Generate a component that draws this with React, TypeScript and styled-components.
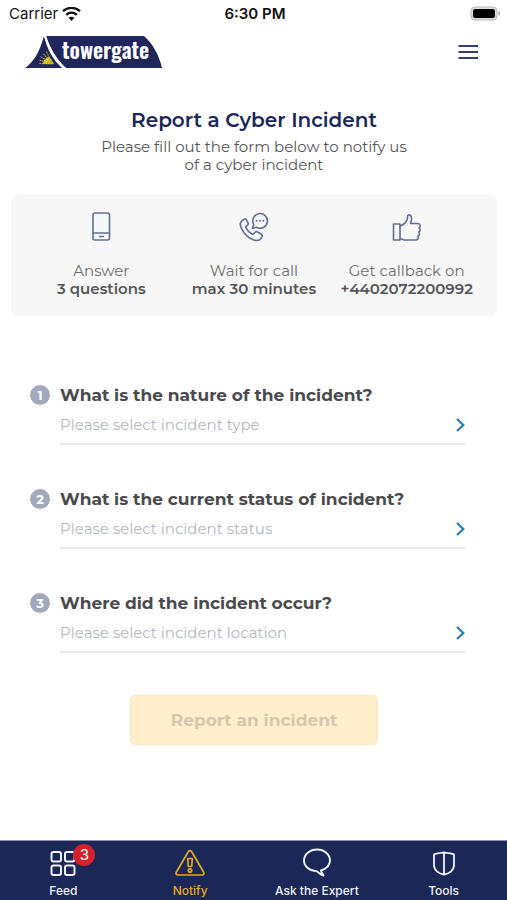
import React from "react";
import styled, { createGlobalStyle } from "styled-components";

const navy = "#1b2757";
const text = "#4b4b4d";

const GlobalStyle = createGlobalStyle`
  *, *::before, *::after { box-sizing: border-box; }
  body {
    margin: 0;
    background: #fff;
    color: ${text};
    font-family: Montserrat, Inter, "Open Sans", sans-serif;
  }
  h1, h2, p, ul, ol { margin: 0; padding: 0; list-style: none; }
  button, select { font: inherit; }
`;

const Screen = styled.div`
  min-height: 100vh;
  display: flex;
  flex-direction: column;
`;

const StatusBar = styled.div`
  display: grid;
  grid-template-columns: 1fr auto 1fr;
  align-items: center;
  height: 28px;
  padding: 0 6px 0 9px;
  color: #111;
  font-family: Inter, sans-serif;
  font-size: 15px;
  line-height: 20px;
`;

const Carrier = styled.span`
  display: flex;
  align-items: center;
  gap: 4px;
`;

const Clock = styled.time`
  font-weight: 600;
`;

const BatteryIcon = styled.svg`
  justify-self: end;
`;

const Header = styled.header`
  display: flex;
  align-items: center;
  justify-content: space-between;
  height: 48px;
  padding: 0 28px 0 25px;
`;

const LogoLink = styled.a`
  display: block;
  height: 34px;
`;

const MenuButton = styled.button`
  display: flex;
  padding: 0;
  border: 0;
  background: none;
  cursor: pointer;
`;

const Main = styled.main`
  display: flex;
  flex-direction: column;
  flex: 1;
  padding: 32px 10px 40px 11px;
`;

const Title = styled.h1`
  color: ${navy};
  font-size: 20px;
  font-weight: 600;
  line-height: 24px;
  text-align: center;
`;

const Intro = styled.p`
  width: 320px;
  max-width: 100%;
  margin: 6px auto 20px;
  color: #555557;
  font-size: 15px;
  line-height: 18px;
  text-align: center;
`;

const Steps = styled.ul`
  display: grid;
  grid-template-columns: repeat(3, 1fr);
  padding: 16px 14px;
  border-radius: 8px;
  background: #f7f7f7;
`;

const Step = styled.li`
  display: flex;
  flex-direction: column;
  align-items: center;
  padding-bottom: 2px;
  font-size: 15px;
  line-height: 18px;
  color: #6c6c6e;
  white-space: nowrap;

  svg { margin-bottom: 18px; }
  strong { font-weight: 600; color: #555557; }
`;

const Form = styled.form`
  display: flex;
  flex-direction: column;
  gap: 42px;
  padding: 67px 32px 0 19px;
`;

const Question = styled.div`
  display: grid;
  grid-template-columns: 20px 1fr;
  column-gap: 10px;
  align-items: center;
`;

const Badge = styled.span`
  height: 20px;
  border-radius: 50%;
  background: #a2a9bc;
  color: #fff;
  font-size: 13px;
  font-weight: 700;
  line-height: 20px;
  text-align: center;
`;

const Label = styled.label`
  font-size: 17px;
  font-weight: 700;
  line-height: 24px;
`;

const Field = styled.div`
  grid-column: 2;
  display: grid;
  align-items: center;
  border-bottom: 2px solid #e9eaec;

  > * { grid-area: 1 / 1; }
  svg { justify-self: end; pointer-events: none; }
`;

const Select = styled.select`
  width: 100%;
  height: 36px;
  padding: 0 24px 0 0;
  border: 0;
  background: none;
  color: #b3b8c1;
  font-size: 15px;
  line-height: 20px;
  appearance: none;
`;

const Submit = styled.button`
  align-self: center;
  width: 248px;
  height: 50px;
  margin-left: 13px;
  border: 1px solid #fbe8bd;
  border-radius: 5px;
  background: #feeecb;
  color: #d5c8ab;
  font-size: 17px;
  font-weight: 700;
`;

const TabBar = styled.nav`
  position: sticky;
  bottom: 0;
  display: grid;
  grid-template-columns: repeat(4, 1fr);
  height: 60px;
  border-top: 1px solid #8b91a8;
  background: ${navy};
`;

const Tab = styled.a<{ $active?: boolean }>`
  display: flex;
  flex-direction: column;
  align-items: center;
  gap: 5px;
  padding-top: 7px;
  color: ${(p) => (p.$active ? "#e5a823" : "#eef1fa")};
  font-family: Inter, sans-serif;
  font-size: 12px;
  font-weight: 500;
  line-height: 16px;
  text-decoration: none;
  white-space: nowrap;
`;

const TabIcon = styled.span`
  position: relative;
  display: flex;
  height: 30px;
`;

const Count = styled.span`
  position: absolute;
  top: -4px;
  left: 24px;
  width: 22px;
  height: 22px;
  border-radius: 50%;
  background: #d3222b;
  color: #fff;
  font-size: 15px;
  font-weight: 400;
  line-height: 22px;
  text-align: center;
`;

const Logo = () => (
  <svg width="138" height="34" viewBox="0 0 138 34" role="img" aria-label="towergate">
    <path d="M21 1H119C128 9 134 20 137 33H41C31 24 25 13 21 1Z" fill="#20255c" />
    <path d="M19 1C15 15 10 26 0 33H37C28 25 22 14 19 1Z" fill="#20255c" />
    <path d="M20 1C24 14 30 24 39 33" fill="none" stroke="#fff" strokeWidth="2" />
    <path d="M29 29H18L19 25L23 22L26 24Z" fill="#f5dc20" />
    <path d="M28 29L14 28.5M28 29L14 25M28 29L15 21.5M28 29L18 18.5M28 29L21 16" fill="none" stroke="#b5a232" strokeWidth="1.1" strokeDasharray="1.8 0.6" />
    <text x="37" y="24" fill="#fff" fontFamily="Oswald, 'Roboto Condensed', 'Liberation Sans', sans-serif" fontSize="22" fontWeight="600">
      towergate
    </text>
  </svg>
);

const PhoneIcon = () => (
  <svg width="30" height="34" viewBox="0 0 30 34" fill="none" stroke="#626d96" strokeWidth="1.6" aria-hidden="true">
    <rect x="7" y="3" width="16.5" height="27" rx="2" />
    <path d="M7 23H23.5M13 26.5H18" />
  </svg>
);

const CallIcon = () => (
  <svg width="30" height="34" viewBox="0 0 30 34" fill="none" stroke="#626d96" strokeWidth="1.6" strokeLinejoin="round" strokeLinecap="round" aria-hidden="true">
    <path d="M5.5 9.3L3 10.8C.8 12.3 1 15.3 2.4 18.2C5 23.8 9.3 28 14.7 30C18 31 20.5 30.6 22 28.5L23.2 26.5C23.6 25.5 23.2 24.8 22.5 24.3L18.2 21.8C17.4 21.4 16.7 21.6 16.1 22.2L14.7 23.8C14.2 24.4 13.5 24.4 12.8 24C10.2 22.5 8.3 20.4 7 17.8C6.6 17.1 6.9 16.5 7.4 16.1L8.7 15C9.3 14.5 9.4 13.7 9.1 13L7.3 9.8C6.9 9.1 6.2 8.9 5.5 9.3Z" />
    <path d="M14.8 14.6A7.3 7.3 0 1 1 17.6 17.3L13.3 18.2Z" />
    <path d="M17.5 10.8H17.6M20.9 10.8H21M24.3 10.8H24.4" strokeWidth="1.9" />
  </svg>
);

const ThumbIcon = () => (
  <svg width="30" height="34" viewBox="0 0 30 34" fill="none" stroke="#626d96" strokeWidth="1.6" strokeLinejoin="round" strokeLinecap="round" aria-hidden="true">
    <path d="M1.5 14H8V30H1.5Z" />
    <path d="M8 16C12 14.5 14.5 12 15.5 8.5V6.5C15.5 4.3 18.8 4.3 19.4 7C20 9.4 19.3 11.5 18.5 13.5H25.5C28.7 13.5 29 17 27 17.9C28.8 19 28.3 21.5 26.6 22C28.1 23.4 27.5 25.5 25.9 26C27 28 26 30 23.5 30H13C11 30 10.5 29 8 28.7" />
  </svg>
);

const Chevron = () => (
  <svg width="10" height="16" viewBox="0 0 10 16" fill="none" stroke="#2180ad" strokeWidth="2.2" aria-hidden="true">
    <path d="M2 2L8.3 8L2 14" />
  </svg>
);

const steps = [
  { icon: <PhoneIcon />, top: "Answer", bottom: "3 questions" },
  { icon: <CallIcon />, top: "Wait for call", bottom: "max 30 minutes" },
  { icon: <ThumbIcon />, top: "Get callback on", bottom: "+4402072200992" },
];

const questions = [
  { id: "type", label: "What is the nature of the incident?", hint: "Please select incident type" },
  { id: "status", label: "What is the current status of incident?", hint: "Please select incident status" },
  { id: "location", label: "Where did the incident occur?", hint: "Please select incident location" },
];

export default function App() {
  return (
    <Screen>
      <GlobalStyle />
      <StatusBar>
        <Carrier>
          Carrier
          <svg width="19" height="15" viewBox="0 0 19 15" fill="none" stroke="#111" strokeWidth="2.4" aria-hidden="true">
            <path d="M1 4.2C5.8-.2 13.2-.2 18 4.2M4.2 7.8C7.3 5 11.7 5 14.8 7.8" />
            <path d="M9.5 14L6.5 10.8C8.2 9.3 10.8 9.3 12.5 10.8Z" fill="#111" stroke="none" />
          </svg>
        </Carrier>
        <Clock>6:30 PM</Clock>
        <BatteryIcon width="31" height="16" viewBox="0 0 31 16" aria-hidden="true">
          <rect x="1" y="1" width="26" height="13" rx="4" fill="#ddd" stroke="#bbb" />
          <rect x="3" y="3" width="22" height="9" rx="2" fill="#000" />
          <path d="M28.5 5C30.6 6 30.6 9 28.5 10Z" fill="#aaa" />
        </BatteryIcon>
      </StatusBar>
      <Header>
        <LogoLink href="#home"><Logo /></LogoLink>
        <MenuButton type="button" aria-label="Menu">
          <svg width="22" height="18" viewBox="0 0 22 18" stroke="#343d70" strokeWidth="2" aria-hidden="true">
            <path d="M1.5 3H21M1.5 9H21M1.5 15H21" />
          </svg>
        </MenuButton>
      </Header>
      <Main>
        <Title>Report a Cyber Incident</Title>
        <Intro>Please fill out the form below to notify us of a cyber incident</Intro>
        <Steps>
          {steps.map((s) => (
            <Step key={s.top}>
              {s.icon}
              <span>{s.top}</span>
              <strong>{s.bottom}</strong>
            </Step>
          ))}
        </Steps>
        <Form>
          {questions.map((q, i) => (
            <Question key={q.id}>
              <Badge>{i + 1}</Badge>
              <Label htmlFor={q.id}>{q.label}</Label>
              <Field>
                <Select id={q.id} defaultValue="">
                  <option value="">{q.hint}</option>
                </Select>
                <Chevron />
              </Field>
            </Question>
          ))}
          <Submit type="submit" disabled>Report an incident</Submit>
        </Form>
      </Main>
      <TabBar>
        <Tab href="#feed">
          <TabIcon>
            <svg width="28" height="30" viewBox="0 0 28 30" fill="none" stroke="currentColor" strokeWidth="2" aria-hidden="true">
              <rect x="2.5" y="4" width="9.5" height="9.5" rx="2" />
              <rect x="16" y="4" width="9.5" height="9.5" rx="2" />
              <rect x="2.5" y="17.5" width="9.5" height="9.5" rx="2" />
              <rect x="16" y="17.5" width="9.5" height="9.5" rx="2" />
            </svg>
            <Count>3</Count>
          </TabIcon>
          Feed
        </Tab>
        <Tab href="#notify" $active>
          <TabIcon>
            <svg width="32" height="30" viewBox="0 0 32 30" fill="none" stroke="currentColor" strokeWidth="1.7" strokeLinejoin="round" aria-hidden="true">
              <path d="M14.4 3.5C15.1 2.2 16.9 2.2 17.6 3.5L29.7 24.2C30.4 25.5 29.8 27 28.3 27H3.7C2.2 27 1.6 25.5 2.3 24.2Z" />
              <path d="M13.7 10.5H18.3L17.7 18.5H14.3Z" />
              <circle cx="16" cy="22.5" r="1.7" />
            </svg>
          </TabIcon>
          Notify
        </Tab>
        <Tab href="#expert">
          <TabIcon>
            <svg width="30" height="30" viewBox="0 0 30 30" fill="none" stroke="currentColor" strokeWidth="1.9" strokeLinejoin="round" aria-hidden="true">
              <path d="M15 1.5C7.8 1.5 2 6.4 2 12.5C2 18.5 7.8 23.2 14.5 23.2C16.8 24.2 18 26.5 21.5 27.5C21.2 25.8 18.8 24.3 18.9 22.5C24.5 21.3 28 17 28 12.5C28 6.4 22.2 1.5 15 1.5Z" />
            </svg>
          </TabIcon>
          Ask the Expert
        </Tab>
        <Tab href="#tools">
          <TabIcon>
            <svg width="24" height="30" viewBox="0 0 24 30" fill="none" stroke="currentColor" strokeWidth="1.8" strokeLinejoin="round" aria-hidden="true">
              <path d="M12 4.5C8.5 4.9 5 5.2 2 6.4V17C2 22 6.5 25.8 12 26.5C17.5 25.8 22 22 22 17V6.4C19 5.2 15.5 4.9 12 4.5ZM12 4.5V26.5" />
            </svg>
          </TabIcon>
          Tools
        </Tab>
      </TabBar>
    </Screen>
  );
}
